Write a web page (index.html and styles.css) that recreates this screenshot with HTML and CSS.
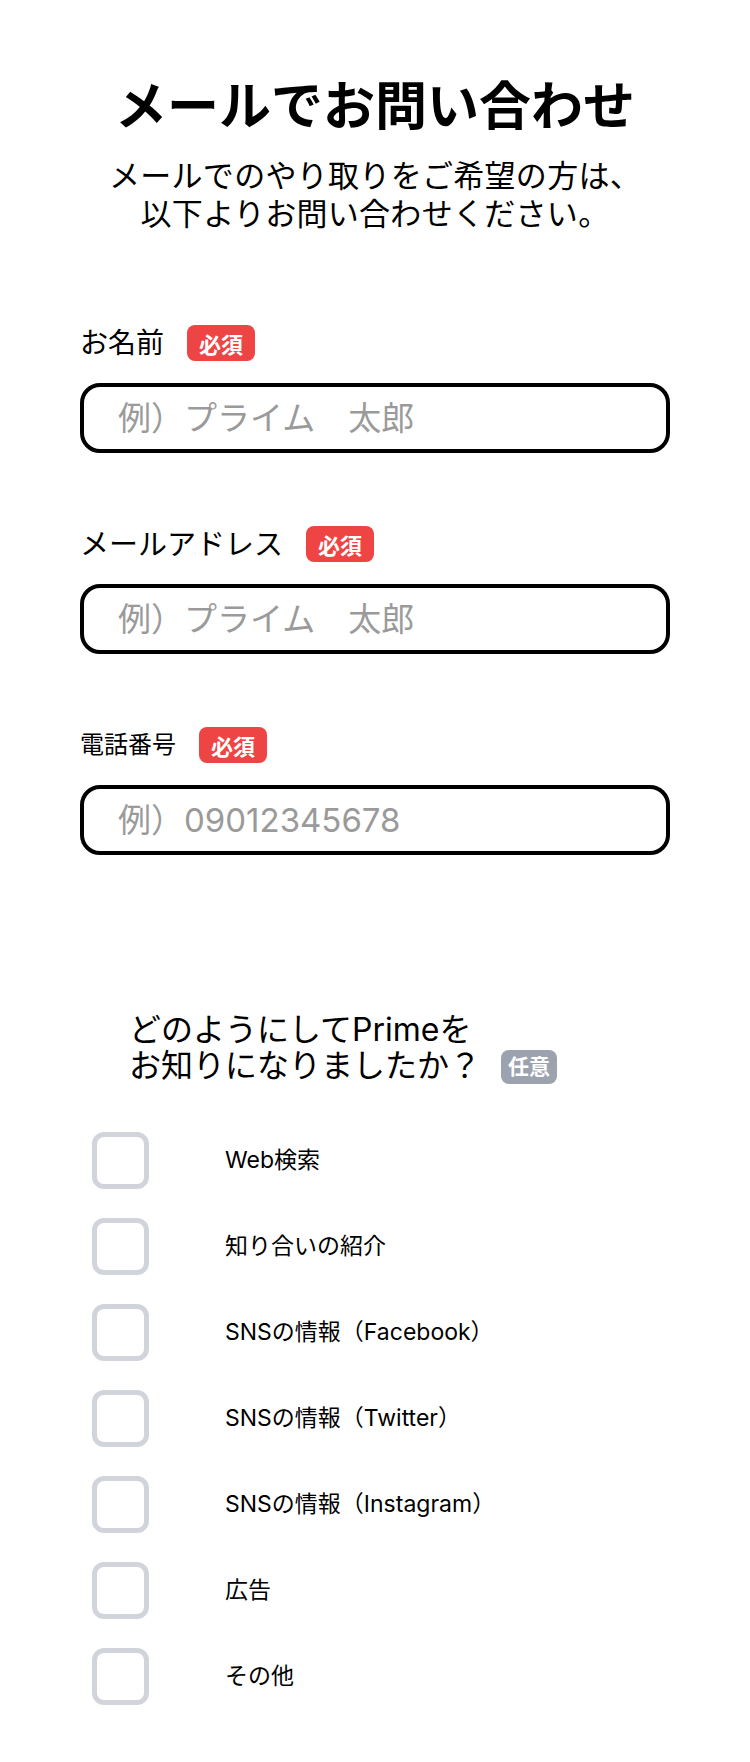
FILE: index.html
```html
<!DOCTYPE html>
<html lang="ja">
<head>
<meta charset="utf-8">
<title>メールでお問い合わせ</title>
<link rel="stylesheet" href="styles.css">
</head>
<body>
<main class="page">
  <header class="head">
    <h1 class="title">メールでお問い合わせ</h1>
    <p class="lead">メールでのやり取りをご希望の方は、<br>以下よりお問い合わせください。</p>
  </header>

  <form class="form">
    <div class="field">
      <div class="label-row">
        <span class="label label-name">お名前</span>
        <span class="badge badge-req">必須</span>
      </div>
      <input class="text-input" type="text" placeholder="例）プライム　太郎">
    </div>

    <div class="field">
      <div class="label-row">
        <span class="label label-mail">メールアドレス</span>
        <span class="badge badge-req">必須</span>
      </div>
      <input class="text-input" type="text" placeholder="例）プライム　太郎">
    </div>

    <div class="field">
      <div class="label-row">
        <span class="label label-tel">電話番号</span>
        <span class="badge badge-req">必須</span>
      </div>
      <input class="text-input" type="text" placeholder="例）09012345678">
    </div>

    <fieldset class="question">
      <p class="q-text">どのようにしてPrimeを<br>お知りになりましたか？<span class="badge badge-opt">任意</span></p>
      <ul class="options">
        <li class="option"><span class="box"></span><span class="opt-label">Web検索</span></li>
        <li class="option"><span class="box"></span><span class="opt-label">知り合いの紹介</span></li>
        <li class="option"><span class="box"></span><span class="opt-label">SNSの情報（Facebook）</span></li>
        <li class="option"><span class="box"></span><span class="opt-label">SNSの情報（Twitter）</span></li>
        <li class="option"><span class="box"></span><span class="opt-label">SNSの情報（Instagram）</span></li>
        <li class="option"><span class="box"></span><span class="opt-label">広告</span></li>
        <li class="option"><span class="box"></span><span class="opt-label">その他</span></li>
      </ul>
    </fieldset>
  </form>
</main>
</body>
</html>
```

FILE: styles.css
```css
* { box-sizing: border-box; }

html, body {
  margin: 0;
  padding: 0;
  background: #ffffff;
}

body {
  font-family: Inter, "Noto Sans CJK JP", sans-serif;
  color: #000000;
}

.page {
  width: 750px;
  min-height: 1762px;
}

.head {
  padding-top: 76px;
  text-align: center;
}

.title {
  margin: 0;
  font-size: 52px;
  line-height: 61px;
  font-weight: 700;
}

.lead {
  margin: 20px 0 0;
  font-size: 31px;
  line-height: 38px;
  letter-spacing: 0.3px;
}

.form {
  padding: 92px 80px 0;
  display: flex;
  flex-direction: column;
}

.field {
  display: flex;
  flex-direction: column;
  gap: 22px;
  margin-bottom: 73px;
}

.label-row {
  display: flex;
  align-items: center;
  gap: 23px;
  height: 36px;
}

.label { line-height: 1; }
.label-name { font-size: 28px; }
.label-mail { font-size: 29px; }
.label-tel { font-size: 24px; }

.badge {
  display: inline-flex;
  align-items: center;
  justify-content: center;
  color: #ffffff;
  font-weight: 700;
  border-radius: 8px;
}

.badge-req {
  width: 68px;
  height: 36px;
  font-size: 22px;
  background: #ef4444;
}

.badge-opt {
  width: 56px;
  height: 34px;
  font-size: 21px;
  background: #9ca3af;
  margin-left: 20px;
  vertical-align: 3px;
}

.text-input {
  width: 590px;
  height: 70px;
  border: 4px solid #000000;
  border-radius: 20px;
  padding: 0 0 0 34px;
  font-family: Inter, "Noto Sans CJK JP", sans-serif;
  font-size: 33px;
  color: #000000;
  background: #ffffff;
  outline: none;
}

.text-input::placeholder {
  color: #9a9a9a;
}

.question {
  margin: 84px 0 0;
  padding: 0;
  border: 0;
}

.q-text {
  margin: 0 0 48px 49px;
  font-size: 32px;
  line-height: 36px;
}

.options {
  list-style: none;
  margin: 0;
  padding: 0 0 0 12px;
  display: flex;
  flex-direction: column;
  gap: 29px;
}

.option {
  display: flex;
  align-items: center;
  gap: 76px;
  height: 57px;
}

.box {
  width: 57px;
  height: 57px;
  border: 5px solid #d1d5db;
  border-radius: 12px;
  flex: none;
}

.opt-label {
  font-size: 23px;
  line-height: 1;
}
```
